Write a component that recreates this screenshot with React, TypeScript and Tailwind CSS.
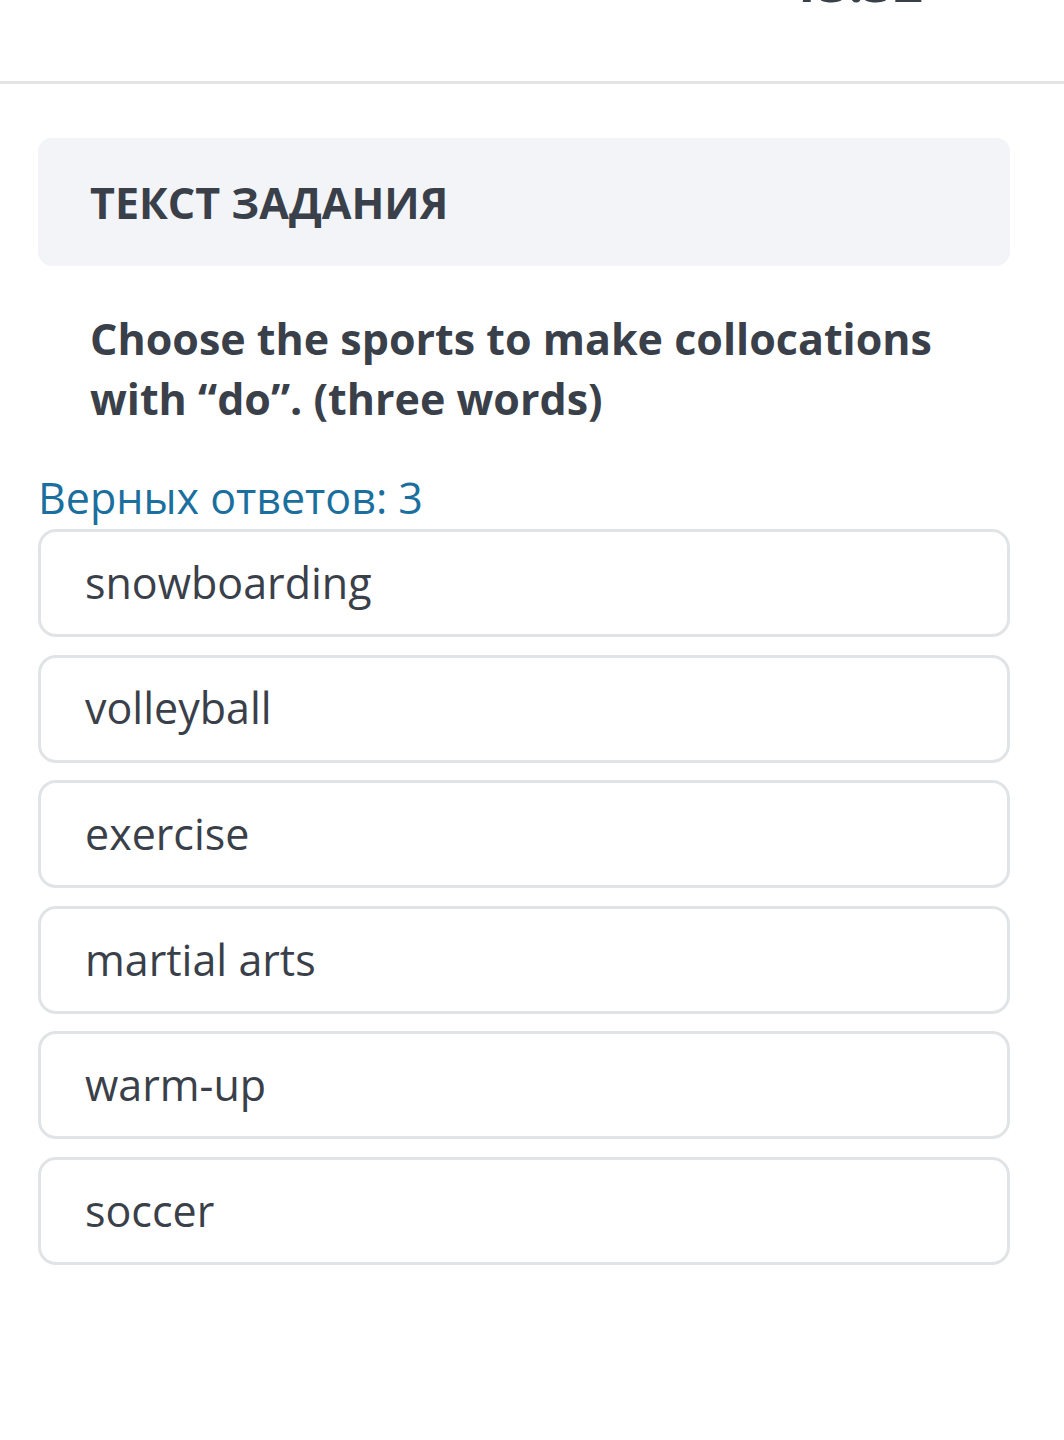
const options = ["snowboarding", "volleyball", "exercise", "martial arts", "warm-up", "soccer"]

export default function App() {
  return (
    <div className="min-h-[1440px] bg-white text-[#3a4049]" style={{ fontFamily: '"Open Sans", sans-serif' }}>
      {/* верхняя панель с таймером */}
      <div className="h-[84px] overflow-hidden border-b-[3px] border-[#e4e4e4] flex justify-end pr-[141px]">
        <span className="text-[52px] font-bold leading-none mt-[-44px]">13:32</span>
      </div>

      <div className="pl-[38px] pr-[54px] pt-[54px]">
        <div className="h-[128px] rounded-[14px] bg-[#f2f4f7] flex items-center pl-[52px]">
          <h2 className="text-[43px] font-bold leading-none">ТЕКСТ ЗАДАНИЯ</h2>
        </div>

        <p className="mt-[43px] pl-[52px] text-[43px] font-bold leading-[60px]">
          Choose the sports to make collocations with “do”. (three words)
        </p>

        <div className="mt-[41px] text-[43px] leading-[56px] text-[#1a6f9e]">Верных ответов: 3</div>

        <div className="mt-[3px] flex flex-col gap-[17.6px]">
          {options.map((o) => (
            <div
              key={o}
              className="h-[108px] rounded-[18px] border-[3px] border-[#e1e4e6] flex items-center pl-[44px] text-[43px]"
            >
              {o}
            </div>
          ))}
        </div>
      </div>
    </div>
  )
}
